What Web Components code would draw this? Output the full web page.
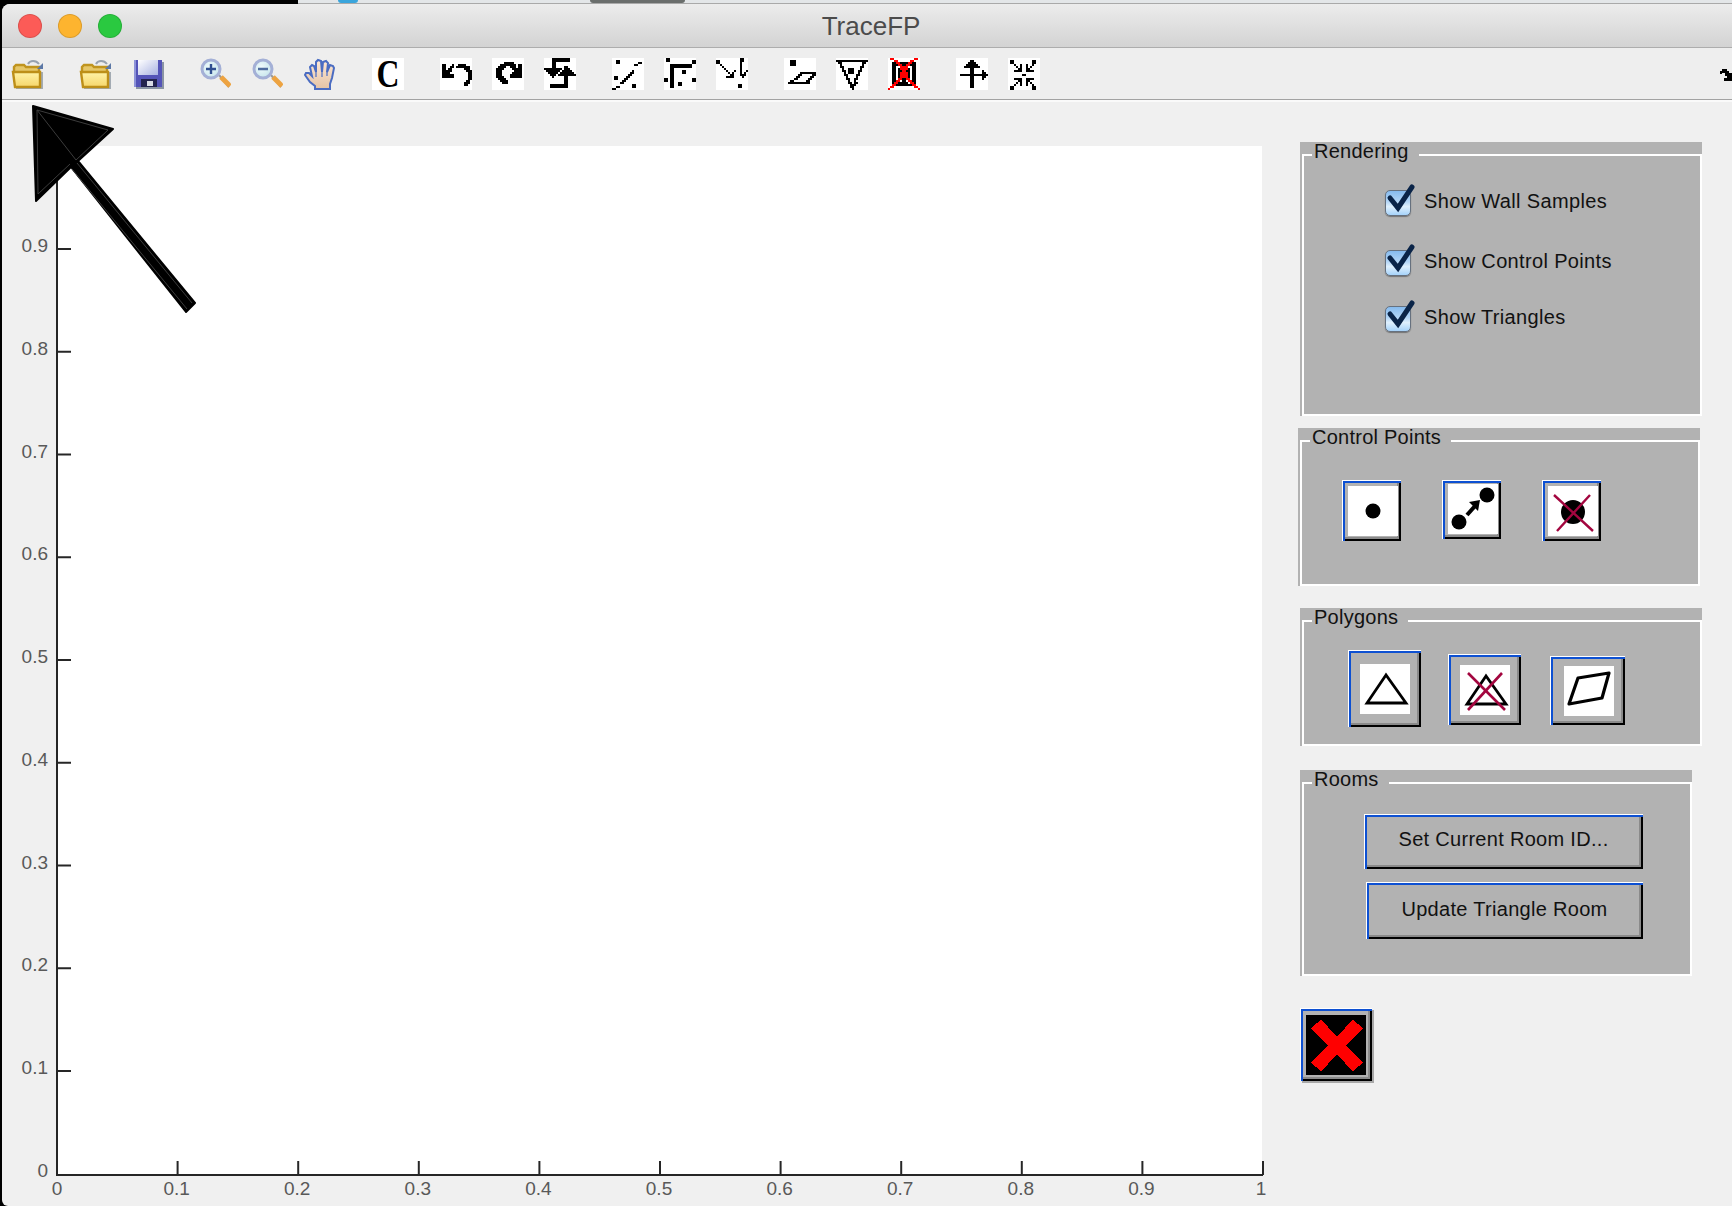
<!DOCTYPE html>
<html>
<head>
<meta charset="utf-8">
<title>TraceFP</title>
<style>
  html, body { margin: 0; padding: 0; background: #000; }
  body { font-family: "Liberation Sans", Arial, sans-serif; overflow: hidden; }
</style>
</head>
<body>
<app-window>
  <title-bar slot="title">TraceFP</title-bar>
  <tool-bar slot="toolbar"></tool-bar>
  <plot-axes slot="plot"></plot-axes>
  <side-column slot="side">
    <tool-panel label="Rendering" style="height:274px;width:402px">
      <check-row style="margin:22px 0 0 81px">Show Wall Samples</check-row>
      <check-row style="margin:34px 0 0 81px">Show Control Points</check-row>
      <check-row style="margin:30px 0 0 81px">Show Triangles</check-row>
    </tool-panel>
    <tool-panel label="Control Points" style="height:158px;width:402px;margin:12px 0 0 -2px">
      <div style="display:flex;align-items:flex-start;margin:26px 0 0 40px">
        <icon-button glyph="point" style="width:59px;height:61px;--pad:6px 3px 5px 6px"></icon-button>
        <icon-button glyph="link" style="width:59px;height:59px;--pad:4px 3px 5px 6px;margin-left:41px"></icon-button>
        <icon-button glyph="pointdel" style="width:59px;height:61px;--pad:6px 3px 5px 6px;margin-left:41px"></icon-button>
      </div>
    </tool-panel>
    <tool-panel label="Polygons" style="height:138px;width:402px;margin-top:22px">
      <div style="display:flex;align-items:flex-start;margin-left:44px">
        <icon-button glyph="tri" style="width:73px;height:77px;margin-top:16px"></icon-button>
        <icon-button glyph="tridel" style="width:73px;height:71px;margin:20px 0 0 27px"></icon-button>
        <icon-button glyph="quad" style="width:75px;height:69px;margin:22px 0 0 29px;--pad:0 0 0 3px"></icon-button>
      </div>
    </tool-panel>
    <tool-panel label="Rooms" style="height:206px;width:392px;margin-top:24px">
      <text-button style="width:279px;height:55px;margin:18px 0 0 60px;padding-bottom:6px">Set Current Room ID...</text-button>
      <text-button style="width:277px;height:57px;margin:13px 0 0 62px">Update Triangle Room</text-button>
    </tool-panel>
    <icon-button class="close" glyph="close" style="width:72px;height:73px;margin-top:32px;background:#b2b2b2"></icon-button>
  </side-column>
  <arrow-overlay slot="overlay"></arrow-overlay>
</app-window>

<script>
class AppWindow extends HTMLElement{
  constructor(){
    super();
    this._shadowRoot = this.attachShadow({mode:"open"});
    this._shadowRoot.innerHTML = `
      <style>
        :host{
          display:block;
          position:relative;
          width:1732px;
          height:1206px;
          overflow:hidden;
          background:#000;
        }
        .desk{
          display:flex;
          height:4px;
        }
        .desk .a{width:298px;background:#000;}
        .desk .b{flex:1;background:#e3e6e8;border-bottom:1px solid #a9a9a9;box-sizing:border-box;display:flex;}
        .blue{width:20px;height:3px;margin-left:40px;background:#3aa5dc;border-radius:0 0 8px 8px;}
        .dark{width:95px;height:3px;margin-left:232px;background:#6a6e6c;border-radius:0 0 8px 8px;}
        .frame{
          margin-left:2px;
          height:1202px;
          display:flex;
          flex-direction:column;
          background:#f0f0f0;
          border-radius:8px 0 0 6px;
          overflow:hidden;
        }
        .main{
          flex:1;
          display:grid;
          grid-template-columns:1298px 1fr;
          min-height:0;
        }
      </style>
      <div class="desk"><div class="a"></div><div class="b"><div class="blue"></div><div class="dark"></div></div></div>
      <div class="frame">
        <slot name="title"></slot>
        <slot name="toolbar"></slot>
        <div class="main">
          <slot name="plot"></slot>
          <slot name="side"></slot>
        </div>
      </div>
      <slot name="overlay"></slot>
    `;
  }
}

class TitleBar extends HTMLElement{
  constructor(){
    super();
    this._shadowRoot = this.attachShadow({mode:"open"});
    this._shadowRoot.innerHTML = `
      <style>
        :host{
          display:flex;
          align-items:center;
          box-sizing:border-box;
          height:44px;
          padding:1px 0 0 16px;
          background:linear-gradient(#ececec,#d3d3d3);
          border-bottom:1px solid #adadad;
          color:#4b4b4b;
          font:26px/30px "Liberation Sans",Arial,sans-serif;
        }
        .lights{display:flex;gap:16px;}
        .lights span{
          width:22px;height:22px;border-radius:50%;
          border:1px solid rgba(0,0,0,.13);
        }
        .r{background:#fc5b57;} .y{background:#fdb42f;} .g{background:#2ac940;}
        .name{
          flex:1;
          text-align:center;
          margin-left:-108px;
          transform:translateX(-2px);
        }
      </style>
      <div class="lights"><span class="r"></span><span class="y"></span><span class="g"></span></div>
      <div class="name"><slot></slot></div>
    `;
  }
}

const BITMAPS = {
  undo:[
    "................",
    "................",
    "................",
    ".##...#..####...",
    ".##..##.#######.",
    ".##.##......###.",
    ".#####.......###",
    ".####.........##",
    ".######.......##",
    ".######.......##",
    "..............##",
    ".............##.",
    "............###.",
    "............##..",
    "................",
    "................"],
  redo:[
    "................",
    "................",
    "......#####.....",
    "....########.##.",
    "...####..###.##.",
    "..####....#####.",
    "..###......####.",
    "..###.....#####.",
    "..###....######.",
    "..####...######.",
    "...####.........",
    "....####........",
    ".....###........",
    "................",
    "................",
    "................"],
  swap:[
    "....#########...",
    "....#########...",
    "....##..........",
    "....##..........",
    "....##....##....",
    "#########.###...",
    ".#######.#####..",
    "..#####.#######.",
    "...###.#########",
    "....#.....##....",
    "..........##....",
    "..........##....",
    "..........##....",
    "...#########....",
    "...#########....",
    "................"],
  diag:[
    "................",
    "..##............",
    "..##.........##.",
    "...........##...",
    "................",
    "................",
    "..........#.....",
    ".........##.....",
    "........##......",
    ".##....##.......",
    ".##...##........",
    ".....##.........",
    "....##..........",
    "..........##....",
    "..##......##....",
    "##.............."],
  corner:[
    ".##.............",
    ".##...........##",
    "..............##",
    "...###########..",
    "...###########..",
    "...##...........",
    "...##....##.....",
    "...##....##.....",
    "...##...........",
    "...##...........",
    "##.##.........##",
    "##.##.........##",
    "...##..##.......",
    "...##..##.......",
    "...##...........",
    "................"],
  split:[
    "............##..",
    "##..........##..",
    "##..........#...",
    "..#.........#...",
    "...#........#...",
    "....#.......#...",
    ".....#...#..#..#",
    "......#.#...#.#.",
    ".......##...###.",
    ".....####....#..",
    "................",
    "................",
    "................",
    "...........##...",
    "...........##...",
    "................"],
  para:[
    "................",
    "...###..........",
    "...###..........",
    "...###..........",
    "................",
    "................",
    "................",
    "........########",
    ".......##.....##",
    "......##.....##.",
    ".....##.....##..",
    "...##......##...",
    "..###########...",
    "................",
    "................",
    "................"],
  trid:[
    "................",
    "################",
    ".##..........##.",
    "..#..........#..",
    "..##........##..",
    "...#..###...#...",
    "...##.###..##...",
    "....#.###..#....",
    "....##....##....",
    ".....#....#.....",
    ".....##..##.....",
    "......#..#......",
    "......##.##.....",
    ".......###......",
    ".......##.......",
    "........#......."],
  del:[
    ".rr..........rr.",
    "...rr......rr...",
    "..##rr####rr##..",
    "..###rr##rr###..",
    "..##..rrrr..##..",
    "..##.#rrrr#.##..",
    "..##.##rr##.##..",
    "..##.#rrrr#.##..",
    "..##.#rrrr#.##..",
    "..##.#rrrr#.##..",
    "..##.rr##rr.##..",
    "..##rr.##.rr##..",
    "..#rr#####.rr#..",
    "..rr########rr..",
    ".rr..........rr.",
    "r..............r"],
  up:[
    "................",
    ".......##.......",
    "......####......",
    ".....######.....",
    "....########....",
    ".......##.......",
    ".......##....#..",
    ".......##....##.",
    "..##############",
    ".......##....##.",
    ".......##....#..",
    ".......##.......",
    ".......##.......",
    ".......##.......",
    ".......##.......",
    "................"],
  collapse:[
    "................",
    ".##.........##..",
    ".##.........##..",
    "...#..#..#..#...",
    "....#.#..#.#....",
    ".....##..##.....",
    "...####..####...",
    "................",
    ".......##.......",
    "................",
    "...####..####...",
    ".....##..##.....",
    "....#.#..#.#....",
    "...#..#..#..#...",
    ".##.........##..",
    ".##.........##.."]
};

const COLOR_ICONS = {
  folder:`
    <svg width="32" height="32" viewBox="0 0 32 32">
      <defs><linearGradient id="f" x1="0" y1="0" x2="0" y2="1"><stop offset="0" stop-color="#fff3a8"/><stop offset="1" stop-color="#f6d66a"/></linearGradient></defs>
      <path d="M5 31h27V14h-2v15H5z" fill="#a3abb3"/>
      <path d="M3 15V9l2-2h8l2 2h13v5" fill="#e6c768" stroke="#c0941e" stroke-width="2.4"/>
      <path d="M2 14h27v15H4z" fill="url(#f)" stroke="#bd8f18" stroke-width="2.4"/>
      <path d="M17 6c2-4 8-4 11 0" fill="none" stroke="#98a2ae" stroke-width="2"/>
      <path d="M32 5v6h-6z" fill="#5c78a6"/>
    </svg>`,
  save:`
    <svg width="32" height="32" viewBox="0 0 32 32">
      <defs><linearGradient id="s" x1="0" y1="0" x2="1" y2="1"><stop offset="0" stop-color="#fff"/><stop offset="1" stop-color="#a9b3e2"/></linearGradient></defs>
      <rect x="4" y="4" width="28" height="27" fill="#8a94a4"/>
      <rect x="2" y="2" width="28" height="27" fill="#5454b8"/>
      <rect x="2" y="2" width="2" height="27" fill="#8d93d8"/>
      <rect x="6" y="2" width="20" height="15" fill="url(#s)"/>
      <rect x="9" y="21" width="16" height="8" fill="#23234e"/>
      <rect x="15" y="23" width="6" height="5" fill="#d9dce6"/>
    </svg>`,
  zoomin:`
    <svg width="32" height="32" viewBox="0 0 32 32">
      <defs><radialGradient id="z" cx=".4" cy=".4" r=".7"><stop offset="0" stop-color="#f0fbfc"/><stop offset="1" stop-color="#c2e2ea"/></radialGradient></defs>
      <path d="M20 17l10 12" stroke="#9a9a9a" stroke-width="2"/>
      <path d="M22 19l9 9" stroke="#eda341" stroke-width="5"/>
      <circle cx="12" cy="11" r="9" fill="url(#z)" stroke="#a4b0d6" stroke-width="3"/>
      <path d="M7 11h10M12 6v10" stroke="#2f4f90" stroke-width="2.4"/>
    </svg>`,
  zoomout:`
    <svg width="32" height="32" viewBox="0 0 32 32">
      <defs><radialGradient id="z" cx=".4" cy=".4" r=".7"><stop offset="0" stop-color="#f0fbfc"/><stop offset="1" stop-color="#c2e2ea"/></radialGradient></defs>
      <path d="M20 17l10 12" stroke="#9a9a9a" stroke-width="2"/>
      <path d="M22 19l9 9" stroke="#eda341" stroke-width="5"/>
      <circle cx="12" cy="11" r="9" fill="url(#z)" stroke="#a4b0d6" stroke-width="3"/>
      <path d="M7 11h10" stroke="#4f6d9f" stroke-width="2.6"/>
    </svg>`,
  hand:`
    <svg width="32" height="32" viewBox="0 0 32 32">
      <defs><linearGradient id="h" x1="0" y1="0" x2="0" y2="1"><stop offset="0" stop-color="#fde8d6"/><stop offset="1" stop-color="#e4c3a5"/></linearGradient></defs>
      <path d="M12 31v-3l-5-4-5-7 1-2h3l3 3-2-9 2-2 2 1 2 6V4l2-2 3 1 1 11 1-10 3-1 2 2-1 9 3-7 3 1 1 2-2 10-2 6v5z" fill="url(#h)" stroke="#4a6cc2" stroke-width="2" stroke-linejoin="miter"/>
      <path d="M13 14v5M19 14v5M24 14v4" stroke="#4a6cc2" stroke-width="1.2"/>
    </svg>`
};

class ToolIcon extends HTMLElement{
  constructor(){
    super();
    this._shadowRoot = this.attachShadow({mode:"open"});
  }
  connectedCallback(){
    this.render();
  }
  render(){
    const name = this.getAttribute("name");
    let inner = "";
    let boxClass = "";
    if(name === "c"){
      inner = `<span class="c">C</span>`;
      boxClass = "white";
    }else if(BITMAPS[name]){
      boxClass = "white";
      const rows = BITMAPS[name];
      let rects = "";
      rows.forEach((row,y) => {
        [...row].forEach((ch,x) => {
          if(ch === "#") rects += `<rect x="${x}" y="${y}" width="1" height="1" fill="#000"/>`;
          if(ch === "r") rects += `<rect x="${x}" y="${y}" width="1" height="1" fill="#f00"/>`;
        });
      });
      inner = `<svg width="32" height="32" viewBox="0 0 16 16" shape-rendering="crispEdges">${rects}</svg>`;
    }else{
      inner = COLOR_ICONS[name];
    }
    this._shadowRoot.innerHTML = `
      <style>
        :host{display:block;width:32px;height:32px;flex:none;}
        .box{width:32px;height:32px;text-align:center;}
        .white{background:#fff;}
        svg{display:block;}
        .c{
          display:block;
          font:bold 30px/32px "Liberation Serif","Times New Roman",serif;
          color:#000;
          transform:scale(1.06,1.32);
        }
      </style>
      <div class="box ${boxClass}">${inner}</div>
    `;
  }
}

class ToolBar extends HTMLElement{
  constructor(){
    super();
    this._shadowRoot = this.attachShadow({mode:"open"});
    this._shadowRoot.innerHTML = `
      <style>
        :host{
          display:flex;
          align-items:center;
          gap:20px;
          box-sizing:border-box;
          height:54px;
          padding:0 0 0 9px;
          position:relative;
          background:#eeeeee;
          border-bottom:2px solid #fafafa;
          box-shadow:inset 0 -1px 0 #a2a2a2;
        }
        .more{position:absolute;right:0;top:21px;display:block;}
      </style>
      <tool-icon name="folder"></tool-icon>
      <tool-icon name="folder" style="margin-left:16px"></tool-icon>
      <tool-icon name="save" style="margin-left:1px"></tool-icon>
      <tool-icon name="zoomin" style="margin-left:15px"></tool-icon>
      <tool-icon name="zoomout"></tool-icon>
      <tool-icon name="hand"></tool-icon>
      <tool-icon name="c" style="margin-left:17px"></tool-icon>
      <tool-icon name="undo" style="margin-left:16px"></tool-icon>
      <tool-icon name="redo"></tool-icon>
      <tool-icon name="swap"></tool-icon>
      <tool-icon name="diag" style="margin-left:16px"></tool-icon>
      <tool-icon name="corner"></tool-icon>
      <tool-icon name="split"></tool-icon>
      <tool-icon name="para" style="margin-left:16px"></tool-icon>
      <tool-icon name="trid"></tool-icon>
      <tool-icon name="del"></tool-icon>
      <tool-icon name="up" style="margin-left:16px"></tool-icon>
      <tool-icon name="collapse"></tool-icon>
      <svg class="more" width="12" height="12" viewBox="0 0 12 12" shape-rendering="crispEdges">
        <path d="M0 2h2V0h5v2h2v2h3v8H4V9h3V7H5V4H2v1H0z" fill="#000"/>
      </svg>
    `;
  }
}

class PlotAxes extends HTMLElement{
  constructor(){
    super();
    this._shadowRoot = this.attachShadow({mode:"open"});
  }
  connectedCallback(){
    this.render();
  }
  render(){
    const x0 = 57, x1 = 1263, y0 = 1175, y1 = 146;
    let ticks = "";
    let labels = "";
    for(let i = 0; i <= 10; i++){
      const name = i === 10 ? "1" : i === 0 ? "0" : "0." + i;
      const x = x0 + (x1 - x0) * i / 10;
      const y = i === 0 ? y0 : 1173.75 - i * 102.75;
      ticks += `<path d="M${x} ${y0}v-14"/>`;
      if(i < 10) ticks += `<path d="M${x0} ${y}h14"/>`;
      const dx = i === 0 ? 0 : i === 10 ? -2 : -1;
      labels += `<text x="${x + dx}" y="1195" text-anchor="middle">${name}</text>`;
      if(i < 10) labels += `<text x="48" y="${y + (i === 0 ? 2 : 3)}" text-anchor="end">${name}</text>`;
    }
    this._shadowRoot.innerHTML = `
      <style>
        :host{display:block;}
        svg{display:block;}
        path{stroke:#262626;stroke-width:2;fill:none;}
        text{
          font:19px "Liberation Sans",Arial,sans-serif;
          fill:#595959;
        }
      </style>
      <svg width="1298" height="1104" viewBox="2 102 1298 1104">
        <rect x="${x0}" y="${y1}" width="${x1 - x0 - 1}" height="${y0 - y1}" fill="#fff"/>
        <path d="M${x0} ${y1}V${y0}H${x1}"/>
        ${ticks}
        ${labels}
      </svg>
    `;
  }
}

class SideColumn extends HTMLElement{
  constructor(){
    super();
    this._shadowRoot = this.attachShadow({mode:"open"});
    this._shadowRoot.innerHTML = `
      <style>
        :host{display:block;padding-top:40px;}
      </style>
      <slot></slot>
    `;
  }
}

class ToolPanel extends HTMLElement{
  constructor(){
    super();
    this._shadowRoot = this.attachShadow({mode:"open"});
  }
  connectedCallback(){
    this._shadowRoot.innerHTML = `
      <style>
        :host{
          display:block;
          box-sizing:border-box;
          background:#b2b2b2;
          color:#111;
        }
        fieldset{
          box-sizing:border-box;
          height:100%;
          min-width:0;
          margin:0 0 0 2px;
          padding:0;
          border:2px solid #fff;
        }
        legend{
          margin-left:8px;
          padding:0 10px 8px 2px;
          font:20px/18px "Liberation Sans",Arial,sans-serif;
          letter-spacing:.25px;
        }
      </style>
      <fieldset>
        <legend>${this.getAttribute("label")}</legend>
        <slot></slot>
      </fieldset>
    `;
  }
}

class CheckRow extends HTMLElement{
  constructor(){
    super();
    this._shadowRoot = this.attachShadow({mode:"open"});
    this._shadowRoot.innerHTML = `
      <style>
        :host{
          display:flex;
          align-items:center;
          height:26px;
          font:20px/22px "Liberation Sans",Arial,sans-serif;
          letter-spacing:.35px;
          color:#111;
        }
        .box{
          position:relative;
          box-sizing:border-box;
          width:26px;
          height:26px;
          flex:none;
          border:1px solid #66717f;
          border-radius:5px;
          background:linear-gradient(#86bbee,#b4d6f6 45%,#dff0fd 65%,#a6d3fa);
          box-shadow:0 1px 1px rgba(0,0,0,.35);
        }
        svg{position:absolute;left:-1px;top:-1px;overflow:visible;}
        .text{margin:-4px 0 0 13px;white-space:nowrap;}
      </style>
      <span class="box">
        <svg width="26" height="26" viewBox="0 0 26 26">
          <path d="M5 8l8 10L27-3" fill="none" stroke="#0a2448" stroke-width="5" stroke-linecap="round" stroke-linejoin="miter"/>
        </svg>
      </span>
      <span class="text"><slot></slot></span>
    `;
  }
}

const BUTTON_GLYPHS = {
  point:`<circle cx="25" cy="25" r="7.5" fill="#000"/>`,
  link:`<circle cx="39" cy="11" r="7.5" fill="#000"/><circle cx="11" cy="38" r="7.5" fill="#000"/>
        <path d="M19 31L27 22" stroke="#000" stroke-width="4"/><path d="M32 16l-2 11-9-9z" fill="#000"/>`,
  pointdel:`<circle cx="25" cy="26" r="12" fill="#000"/>
        <path d="M6 9L45 45M42 9L9 45" stroke="#a3063f" stroke-width="2.4"/>`,
  tri:`<path d="M26 11L7 39H46Z" fill="none" stroke="#000" stroke-width="2.8"/>`,
  tridel:`<path d="M26 11L7 39H46Z" fill="none" stroke="#000" stroke-width="2.8"/>
        <path d="M8 8L45 45M42 8L8 45" stroke="#a3063f" stroke-width="2.6"/>`,
  quad:`<path d="M14 12L45 7L38 32L5 38Z" fill="none" stroke="#000" stroke-width="3.2" stroke-linejoin="round"/>`
};

class IconButton extends HTMLElement{
  constructor(){
    super();
    this._shadowRoot = this.attachShadow({mode:"open"});
  }
  connectedCallback(){
    this.render();
  }
  render(){
    const glyph = this.getAttribute("glyph");
    let art;
    if(glyph === "close"){
      art = `<svg class="black" width="60" height="60" viewBox="0 0 60 60">
          <rect width="60" height="60" fill="#000"/>
          <path d="M10 9L52 52M52 9L10 52" stroke="#f00" stroke-width="13" shape-rendering="crispEdges"/>
        </svg>`;
    }else{
      art = `<svg width="50" height="50" viewBox="0 0 50 50" style="background:#fff">${BUTTON_GLYPHS[glyph]}</svg>`;
    }
    this._shadowRoot.innerHTML = `
      <style>
        :host{
          display:flex;
          align-items:center;
          justify-content:center;
          box-sizing:border-box;
          flex:none;
          padding:var(--pad,0);
          background:#b2b2b2;
          box-shadow:inset 1px 1px 0 #fff,inset 3px 3px 0 #0d50d2,inset -2px -2px 0 #000,inset -4px -4px 0 #8a8a8a;
        }
        :host(.close){
          box-shadow:inset 1px 1px 0 #fff,inset 3px 3px 0 #0d50d2,inset -2px -2px 0 #000,inset -4px -4px 0 #8a8a8a,2px 2px 0 #a8a8a8;
        }
        svg{display:block;overflow:hidden;flex:none;}
      </style>
      ${art}
    `;
  }
}

class TextButton extends HTMLElement{
  constructor(){
    super();
    this._shadowRoot = this.attachShadow({mode:"open"});
    this._shadowRoot.innerHTML = `
      <style>
        :host{
          display:flex;
          align-items:center;
          justify-content:center;
          box-sizing:border-box;
          padding-bottom:4px;
          background:#b2b2b2;
          box-shadow:inset 1px 1px 0 #fff,inset 3px 3px 0 #0d50d2,inset -2px -2px 0 #000,inset -4px -4px 0 #8a8a8a;
          font:20px/22px "Liberation Sans",Arial,sans-serif;
          letter-spacing:.3px;
          color:#111;
          white-space:nowrap;
        }
      </style>
      <slot></slot>
    `;
  }
}

class ArrowOverlay extends HTMLElement{
  constructor(){
    super();
    this._shadowRoot = this.attachShadow({mode:"open"});
    this._shadowRoot.innerHTML = `
      <style>
        :host{position:absolute;left:0;top:0;display:block;pointer-events:none;}
        svg{display:block;}
      </style>
      <svg width="240" height="330" viewBox="0 0 240 330">
        <path d="M33 106L113 129L78 161L195 303L186 312L71 167L36 201Z" fill="#000" stroke="#000" stroke-width="2" stroke-linejoin="round"/>
        <path d="M37 110L108 130L76 160L37 110L38 194L70 164" fill="none" stroke="#3c3c3c" stroke-width="1"/>
        <path d="M76 163L191 303M71 169L186 309" fill="none" stroke="#3c3c3c" stroke-width="1" transform="translate(1 0)"/>
      </svg>
    `;
  }
}

customElements.define("app-window", AppWindow);
customElements.define("title-bar", TitleBar);
customElements.define("tool-icon", ToolIcon);
customElements.define("tool-bar", ToolBar);
customElements.define("plot-axes", PlotAxes);
customElements.define("side-column", SideColumn);
customElements.define("tool-panel", ToolPanel);
customElements.define("check-row", CheckRow);
customElements.define("icon-button", IconButton);
customElements.define("text-button", TextButton);
customElements.define("arrow-overlay", ArrowOverlay);
</script>
</body>
</html>
